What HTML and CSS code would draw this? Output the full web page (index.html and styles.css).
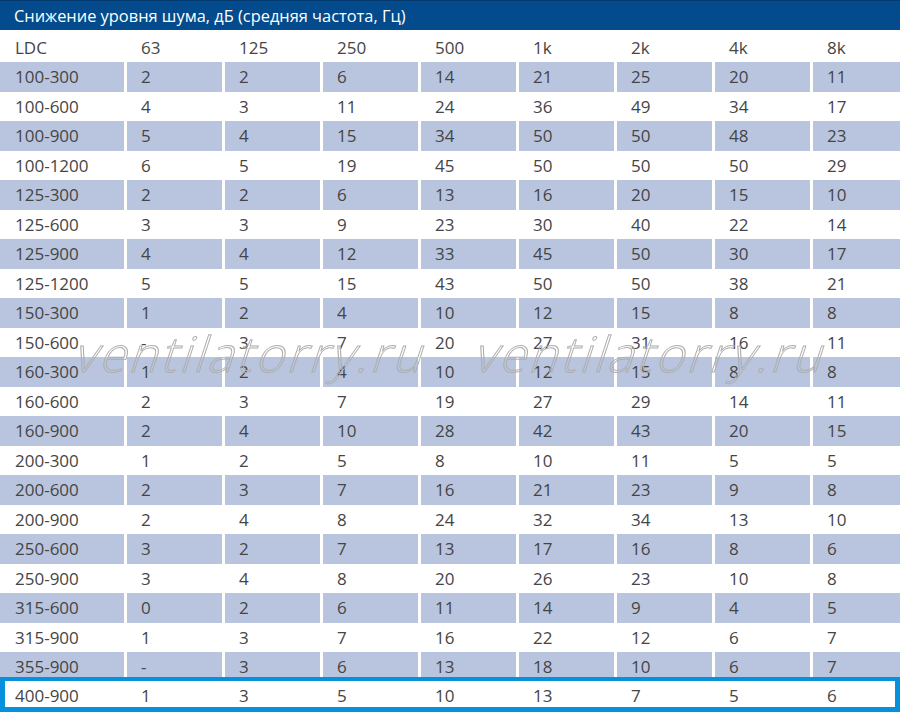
FILE: index.html
```html
<!DOCTYPE html>
<html lang="ru">
<head>
<meta charset="utf-8">
<title>Снижение уровня шума</title>
<link rel="stylesheet" href="styles.css">
</head>
<body>
<div class="page">
  <div class="title">Снижение уровня шума, дБ (средняя частота, Гц)</div>
  <div class="row head"><div>LDC</div><div>63</div><div>125</div><div>250</div><div>500</div><div>1k</div><div>2k</div><div>4k</div><div>8k</div></div>
  <div class="row shade"><div>100-300</div><div>2</div><div>2</div><div>6</div><div>14</div><div>21</div><div>25</div><div>20</div><div>11</div></div>
  <div class="row"><div>100-600</div><div>4</div><div>3</div><div>11</div><div>24</div><div>36</div><div>49</div><div>34</div><div>17</div></div>
  <div class="row shade"><div>100-900</div><div>5</div><div>4</div><div>15</div><div>34</div><div>50</div><div>50</div><div>48</div><div>23</div></div>
  <div class="row"><div>100-1200</div><div>6</div><div>5</div><div>19</div><div>45</div><div>50</div><div>50</div><div>50</div><div>29</div></div>
  <div class="row shade"><div>125-300</div><div>2</div><div>2</div><div>6</div><div>13</div><div>16</div><div>20</div><div>15</div><div>10</div></div>
  <div class="row"><div>125-600</div><div>3</div><div>3</div><div>9</div><div>23</div><div>30</div><div>40</div><div>22</div><div>14</div></div>
  <div class="row shade"><div>125-900</div><div>4</div><div>4</div><div>12</div><div>33</div><div>45</div><div>50</div><div>30</div><div>17</div></div>
  <div class="row"><div>125-1200</div><div>5</div><div>5</div><div>15</div><div>43</div><div>50</div><div>50</div><div>38</div><div>21</div></div>
  <div class="row shade"><div>150-300</div><div>1</div><div>2</div><div>4</div><div>10</div><div>12</div><div>15</div><div>8</div><div>8</div></div>
  <div class="row"><div>150-600</div><div>-</div><div>3</div><div>7</div><div>20</div><div>27</div><div>31</div><div>16</div><div>11</div></div>
  <div class="row shade"><div>160-300</div><div>1</div><div>2</div><div>4</div><div>10</div><div>12</div><div>15</div><div>8</div><div>8</div></div>
  <div class="row"><div>160-600</div><div>2</div><div>3</div><div>7</div><div>19</div><div>27</div><div>29</div><div>14</div><div>11</div></div>
  <div class="row shade"><div>160-900</div><div>2</div><div>4</div><div>10</div><div>28</div><div>42</div><div>43</div><div>20</div><div>15</div></div>
  <div class="row"><div>200-300</div><div>1</div><div>2</div><div>5</div><div>8</div><div>10</div><div>11</div><div>5</div><div>5</div></div>
  <div class="row shade"><div>200-600</div><div>2</div><div>3</div><div>7</div><div>16</div><div>21</div><div>23</div><div>9</div><div>8</div></div>
  <div class="row"><div>200-900</div><div>2</div><div>4</div><div>8</div><div>24</div><div>32</div><div>34</div><div>13</div><div>10</div></div>
  <div class="row shade"><div>250-600</div><div>3</div><div>2</div><div>7</div><div>13</div><div>17</div><div>16</div><div>8</div><div>6</div></div>
  <div class="row"><div>250-900</div><div>3</div><div>4</div><div>8</div><div>20</div><div>26</div><div>23</div><div>10</div><div>8</div></div>
  <div class="row shade"><div>315-600</div><div>0</div><div>2</div><div>6</div><div>11</div><div>14</div><div>9</div><div>4</div><div>5</div></div>
  <div class="row"><div>315-900</div><div>1</div><div>3</div><div>7</div><div>16</div><div>22</div><div>12</div><div>6</div><div>7</div></div>
  <div class="row shade"><div>355-900</div><div>-</div><div>3</div><div>6</div><div>13</div><div>18</div><div>10</div><div>6</div><div>7</div></div>
  <div class="row selected"><div>400-900</div><div>1</div><div>3</div><div>5</div><div>10</div><div>13</div><div>7</div><div>5</div><div>6</div></div>
  <span class="wm wm1">ventilatorry.ru</span>
  <span class="wm wm2">ventilatorry.ru</span>
</div>
</body>
</html>
```

FILE: styles.css
```css
html, body {
  margin: 0;
  padding: 0;
  background: #ffffff;
}
body {
  width: 900px;
  height: 712px;
  overflow: hidden;
  font-family: "Open Sans", "Liberation Sans", sans-serif;
  color: #454545;
}
.page {
  position: relative;
  width: 900px;
  height: 712px;
}
.title {
  height: 30px;
  box-sizing: border-box;
  border-top: 1px solid #02396e;
  background: #034b8c;
  color: #ffffff;
  font-size: 16.4px;
  font-weight: 500;
  line-height: 30px;
  padding-left: 14px;
  white-space: nowrap;
}
.row {
  display: grid;
  grid-template-columns: 124px repeat(7, 95px) 1fr;
  column-gap: 3px;
  height: 29.5px;
  font-size: 17px;
}
.row > div {
  display: flex;
  align-items: center;
  padding-left: 14px;
  white-space: nowrap;
}
.row > div:first-child {
  padding-left: 15px;
}
.row.head {
  height: 32px;
}
.row.head > div {
  padding-top: 2px;
}
.row.shade > div {
  background: #b9c5de;
}
.row.selected {
  margin-top: -4.5px;
  height: 35px;
  box-sizing: border-box;
  padding-top: 4px;
  padding-bottom: 5px;
  box-shadow: inset 0 4px 0 #0790dc, inset 0 -5px 0 #0790dc, inset 5px 0 0 #0790dc, inset -5px 0 0 #0790dc;
  background: #ffffff;
  position: relative;
}
.row.selected > div {
  padding-top: 2px;
}
.wm {
  position: absolute;
  top: 329px;
  font-size: 49px;
  line-height: 49px;
  font-weight: 300;
  color: transparent;
  -webkit-text-stroke: 1px #adadad;
  letter-spacing: 2.8px;
  white-space: nowrap;
  pointer-events: none;
  transform: skewX(-18deg);
  transform-origin: 0 44px;
}
.wm1 {
  left: 72px;
}
.wm2 {
  left: 472px;
}
```
